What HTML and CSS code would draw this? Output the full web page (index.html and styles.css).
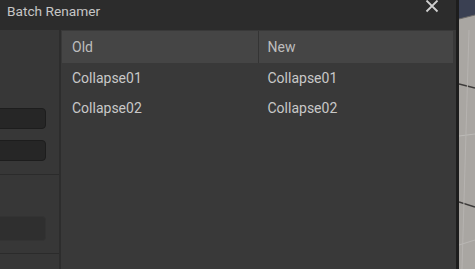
FILE: index.html
```html
<!DOCTYPE html>
<html>
<head>
<meta charset="UTF-8">
<title>Batch Renamer</title>
<link rel="stylesheet" href="styles.css">
</head>
<body>
  <div class="screen">
    <div class="window">
      <div class="titlebar">
        <span class="title">Batch Renamer</span>
        <svg class="close" width="14" height="14" viewBox="0 0 14 14">
          <path d="M1.5 1.5 L12.5 12.5 M12.5 1.5 L1.5 12.5" stroke="#d0d0d0" stroke-width="1.8" fill="none"/>
        </svg>
      </div>
      <div class="body">
        <div class="side">
          <div class="field dark first"></div>
          <div class="field dark"></div>
          <div class="sep"></div>
          <div class="field light"></div>
          <div class="sep last"></div>
        </div>
        <div class="main">
          <div class="row head">
            <div class="cell">Old</div>
            <div class="cell divided">New</div>
          </div>
          <div class="row">
            <div class="cell">Collapse01</div>
            <div class="cell">Collapse01</div>
          </div>
          <div class="row">
            <div class="cell">Collapse02</div>
            <div class="cell">Collapse02</div>
          </div>
        </div>
      </div>
    </div>
    <div class="viewport">
      <svg width="16" height="269" viewBox="0 0 16 269">
        <rect width="16" height="269" fill="#a9a6a2"/>
        <polygon points="0,0 16,0 16,15 0,19" fill="#3a4052"/>
        <path d="M0 19 L16 15" stroke="#6d6a68" stroke-width="1"/>
        <path d="M0 84 L16 88" stroke="#3c3a39" stroke-width="1.5"/>
        <path d="M0 202 L16 207" stroke="#3c3a39" stroke-width="1.5"/>
        <path d="M0 136 L16 134" stroke="#bcbab7" stroke-width="1"/>
        <path d="M10 30 L3 269" stroke="#b6b3b0" stroke-width="1"/>
        <path d="M0 245 L16 240" stroke="#b9b7b4" stroke-width="1"/>
      </svg>
    </div>
  </div>
</body>
</html>
```
FILE: styles.css
```css
html, body {
  margin: 0;
  padding: 0;
  background: #3a3a3a;
}
body {
  font-family: Roboto, "Liberation Sans", sans-serif;
  font-size: 14px;
  color: #c8c8c8;
}
.screen {
  display: flex;
  width: 475px;
  height: 269px;
  overflow: hidden;
}
.window {
  width: 457px;
  display: flex;
  flex-direction: column;
  border-right: 3px solid #1d1d1d;
  background: #393939;
}
.titlebar {
  height: 30px;
  flex: none;
  display: flex;
  justify-content: space-between;
  align-items: flex-start;
  background: #2c2c2c;
  padding: 3px 17px 0 7px;
  box-sizing: border-box;
}
.title {
  font-size: 13.7px;
  line-height: 16px;
  color: #c6c6c6;
}
.close {
  margin-top: -4px;
}
.body {
  flex: 1;
  display: flex;
  min-height: 0;
}
.side {
  width: 59px;
  flex: none;
  background: #373737;
  border-right: 2px solid #2d2d2d;
  display: flex;
  flex-direction: column;
  overflow: hidden;
}
.field {
  margin-left: -12px;
  width: 58px;
  height: 21px;
  box-sizing: border-box;
  border-radius: 4px;
  flex: none;
}
.field.dark {
  background: #262626;
  border: 1px solid #1d1d1d;
  margin-top: 11px;
}
.field.first {
  margin-top: 78px;
}
.field.light {
  background: #2f2f2f;
  border: 1px solid #333333;
  height: 25px;
  margin-top: 41px;
}
.sep {
  height: 1px;
  background: #2b2b2b;
  margin-top: 13px;
  flex: none;
}
.sep.last {
  margin-top: 12px;
}
.main {
  flex: 1;
  padding: 1px 3px 0 1px;
}
.row {
  display: flex;
  height: 30px;
  align-items: center;
}
.row.head {
  height: 32px;
  background: #454545;
}
.cell {
  flex: 1;
  padding-left: 10px;
  line-height: 16px;
}
.row.head .cell {
  height: 32px;
  line-height: 32px;
  color: #bdbdbd;
}
.cell.divided {
  border-left: 1px solid #343434;
  padding-left: 9px;
}
.viewport {
  flex: 1;
  height: 269px;
}
.viewport svg {
  display: block;
}
```
